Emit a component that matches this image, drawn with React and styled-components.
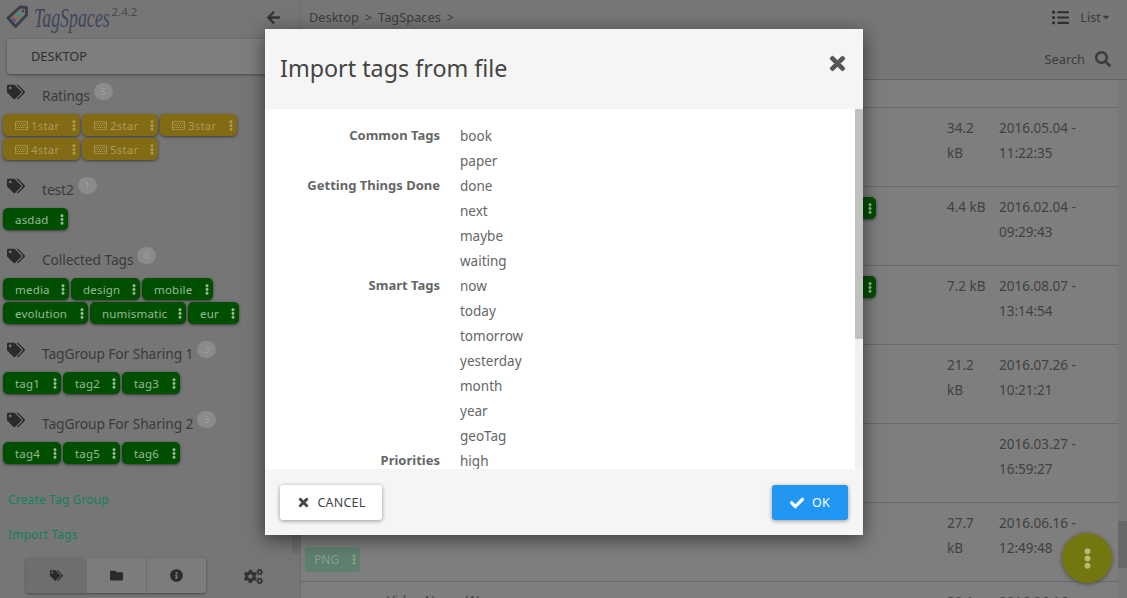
import React from "react";
import styled, { createGlobalStyle } from "styled-components";
import { FaTags, FaFolder, FaInfoCircle, FaCogs, FaArrowLeft, FaListUl, FaSearch, FaTimes, FaCheck, FaEllipsisV, FaRegKeyboard, FaCaretDown } from "react-icons/fa";

const FONT = `"Noto Sans", "Open Sans", sans-serif`;

const GROUPS = [
  { name: "Ratings", count: 5, color: "gold", icon: true, tags: [["1star", 77], ["2star", 76], ["3star", 77], ["4star", 77], ["5star", 76]] },
  { name: "test2", count: 1, tags: [["asdad", 65]] },
  { name: "Collected Tags", count: 6, tags: [["media", 66], ["design", 69], ["mobile", 71], ["evolution", 85], ["numismatic", 96], ["eur", 51]] },
  { name: "TagGroup For Sharing 1", count: 3, tags: [["tag1", 58], ["tag2", 57], ["tag3", 58]] },
  { name: "TagGroup For Sharing 2", count: 3, tags: [["tag4", 58], ["tag5", 57], ["tag6", 58]] },
];

const ROWS = [
  { size: "34.2 kB", date: "2016.05.04 - 11:22:35" },
  { size: "4.4 kB", date: "2016.02.04 - 09:29:43", stub: true },
  { size: "7.2 kB", date: "2016.08.07 - 13:14:54", stub: true },
  { size: "21.2 kB", date: "2016.07.26 - 10:21:21" },
  { size: "", date: "2016.03.27 - 16:59:27" },
  { size: "27.7 kB", date: "2016.06.16 - 12:49:48", png: true },
  { size: "20.1 kB", date: "2016.06.16 - 12:49:48", name: "Video Name (1)" },
];

const IMPORTED = [
  ["Common Tags", "book"], ["", "paper"],
  ["Getting Things Done", "done"], ["", "next"], ["", "maybe"], ["", "waiting"],
  ["Smart Tags", "now"], ["", "today"], ["", "tomorrow"], ["", "yesterday"], ["", "month"], ["", "year"], ["", "geoTag"],
  ["Priorities", "high"], ["", "medium"], ["", "low"],
];

const GlobalStyle = createGlobalStyle`
  html, body { margin: 0; height: 100%; overflow: hidden; }
  body { font-family: ${FONT}; color: #3c3c3c; background: #7e7e7e; }
`;

const Page = styled.div`
  display: flex;
  width: 1127px;
  height: 598px;
  overflow: hidden;
`;

const Sidebar = styled.aside`
  width: 301px;
  height: 598px;
  flex: none;
  display: flex;
  flex-direction: column;
  background: #767676;
  border-right: 1px solid #6c6c6c;
  box-sizing: border-box;
  position: relative;
`;

const BrandRow = styled.div`
  height: 38px;
  flex: none;
  display: flex;
  align-items: center;
  padding: 0 19px 0 6px;
`;

const LogoWrap = styled.svg`
  width: 22px;
  height: 24px;
  flex: none;
  margin: -5px 6px 0 0;
`;

const BrandName = styled.span`
  font-family: "Liberation Serif", serif;
  font-style: italic;
  font-size: 27px;
  line-height: 30px;
  color: #41455a;
  display: inline-block;
  transform: scaleX(0.66);
  transform-origin: left center;
  margin: -3px -38px 0 0;
`;

const Version = styled.span`
  font-size: 11.5px;
  color: #4a4a4a;
  align-self: flex-start;
  margin: 5px 0 0 1px;
  line-height: 14px;
  flex: 1;
`;

const BackIcon = styled(FaArrowLeft)`
  font-size: 15px;
  color: #333;
  margin-top: -4px;
`;

const LocationBox = styled.div`
  height: 35px;
  margin: 1px 0 0 7px;
  padding: 0 0 2px 24px;
  box-sizing: border-box;
  flex: none;
  display: flex;
  align-items: center;
  font-size: 12.8px;
  color: #2f2f2f;
  background: #7e7e7e;
  border-radius: 3px 0 0 3px;
  box-shadow: 0 1px 3px rgba(0, 0, 0, 0.4);
`;

const GroupTitle = styled.div`
  display: flex;
  align-items: flex-start;
  height: 31px;
  padding-left: 7px;
  margin-top: ${({ $first }) => ($first ? "9px" : "17px")};
  color: #3a3a3a;
`;

const GroupIcon = styled(FaTags)`
  font-size: 18px;
  color: #2a2a2a;
  flex: none;
  width: 18px;
`;

const GroupName = styled.span`
  font-size: 13.8px;
  letter-spacing: -0.1px;
  margin: 3px 0 0 17px;
  line-height: 20px;
  white-space: nowrap;
`;

const CountBadge = styled.span`
  width: 19px;
  height: 17px;
  border-radius: 9px;
  background: #8b8b8b;
  color: #a0a0a0;
  font-size: 9px;
  line-height: 17px;
  text-align: center;
  margin-left: 4px;
`;

const TagWrap = styled.div`
  display: flex;
  flex-wrap: wrap;
  gap: 2px;
  padding-left: 3px;
  width: 270px;
`;

const Tag = styled.span`
  box-sizing: border-box;
  height: 22px;
  display: flex;
  align-items: center;
  padding-left: 12px;
  border-radius: 5px;
  font-size: 11.5px;
  letter-spacing: 0.2px;
  background: ${({ $color }) => ($color === "gold" ? "#836a14" : "#004f00")};
  color: ${({ $color }) => ($color === "gold" ? "#a89a5a" : "#98b898")};
  box-shadow: 0 1px 3px rgba(0, 0, 0, 0.5);
  white-space: nowrap;
`;

const TagLabel = styled.span`
  flex: 1;
  display: flex;
  align-items: center;
  gap: 3px;
`;

const TagDots = styled(FaEllipsisV)`
  font-size: 11px;
  width: 6px;
  flex: none;
  margin-right: 3px;
`;

const SideLinks = styled.div`
  flex: 1;
  display: flex;
  flex-direction: column;
  gap: 18px;
  padding-top: 27px;
`;

const SideLink = styled.a`
  font-size: 12px;
  letter-spacing: 0.15px;
  color: #13805f;
  padding-left: 8px;
  line-height: 17px;
  display: block;
`;

const SideFooter = styled.div`
  flex: none;
  height: 40px;
  display: flex;
  align-items: flex-start;
  padding-left: 26px;
`;

const ButtonGroup = styled.div`
  display: flex;
  height: 35px;
  border-radius: 3px;
  background: #7c7c7c;
  box-shadow: 0 1px 3px rgba(0, 0, 0, 0.4);
`;

const GroupBtn = styled.span`
  width: 60px;
  display: flex;
  align-items: center;
  justify-content: center;
  font-size: 13px;
  color: #2a2a2a;
  box-sizing: border-box;
  border-left: ${({ $first }) => ($first ? "none" : "1px solid #6e6e6e")};
  background: ${({ $active }) => ($active ? "#6e6e6e" : "transparent")};
  border-radius: 3px;
`;

const GearBtn = styled.span`
  margin: 9px 0 0 38px;
  font-size: 19px;
  line-height: 19px;
  color: #333;
`;

const SideThumb = styled.span`
  position: absolute;
  right: 0;
  top: 535px;
  width: 8px;
  height: 18px;
  background: #6c6c6c;
`;

const Main = styled.main`
  flex: 1;
  min-width: 0;
  height: 598px;
  display: flex;
  flex-direction: column;
  background: #7e7e7e;
  position: relative;
`;

const TopBar = styled.header`
  height: 79px;
  flex: none;
  background: #777;
  border-bottom: 1px solid #626262;
  display: flex;
  flex-direction: column;
  padding: 0 16px 0 8px;
  font-size: 12.8px;
`;

const BarRow = styled.div`
  display: flex;
  align-items: center;
  justify-content: space-between;
  box-sizing: border-box;
  flex: none;
  height: ${({ $h }) => $h}px;
  padding-top: ${({ $pad }) => $pad || 0}px;
`;

const Crumbs = styled.div`
  display: flex;
  gap: 6px;
  color: #3c3c3c;
`;

const BarControl = styled.span`
  display: flex;
  align-items: center;
  margin-left: auto;
  color: #3c3c3c;
`;

const ListIcon = styled(FaListUl)`
  font-size: 17px;
  margin-right: 11px;
  color: #2e2e2e;
`;

const SearchIcon = styled(FaSearch)`
  font-size: 16px;
  margin-left: 10px;
  color: #3c3c3c;
`;

const FileList = styled.div`
  flex: 1;
  min-height: 0;
  overflow: hidden;
  padding-top: 27px;
  margin-right: 9px;
`;

const FileRow = styled.div`
  box-sizing: border-box;
  height: 79px;
  border-top: 1px solid #696969;
  display: flex;
  position: relative;
  font-size: 13.5px;
  line-height: 25px;
  color: #414141;
  padding-left: 646px;
  padding-top: 8px;
`;

const SizeCell = styled.div`
  width: 44px;
  margin-right: 8px;
  flex: none;
`;

const DateCell = styled.div`
  width: 90px;
  flex: none;
`;

const StubTag = styled.span`
  position: absolute;
  left: 559px;
  top: 10px;
  width: 16px;
  height: 22px;
  display: flex;
  align-items: center;
  justify-content: flex-end;
  background: #004f00;
  color: #98b898;
  border-radius: 5px;
  box-shadow: 0 1px 3px rgba(0, 0, 0, 0.5);
`;

const PngTag = styled.span`
  position: absolute;
  left: 4px;
  top: 44px;
  width: 55px;
  height: 25px;
  box-sizing: border-box;
  padding-left: 9px;
  display: flex;
  align-items: center;
  justify-content: space-between;
  border-radius: 3px;
  background: #5f7f6f;
  color: #86a092;
  font-size: 12px;
`;

const FileName = styled.span`
  position: absolute;
  left: 86px;
  top: 6px;
  font-size: 13px;
`;

const MainScrollbar = styled.div`
  position: absolute;
  right: 0;
  top: 80px;
  bottom: 0;
  width: 9px;
  background: #797979;
`;

const MainThumb = styled.div`
  position: absolute;
  top: 441px;
  left: 0;
  width: 9px;
  height: 47px;
  background: #686868;
`;

const Fab = styled.span`
  position: absolute;
  right: 15px;
  top: 533px;
  width: 50px;
  height: 50px;
  border-radius: 50%;
  background: #74770f;
  box-shadow: 0 1px 4px rgba(0, 0, 0, 0.4);
  display: flex;
  align-items: center;
  justify-content: center;
  color: #b9ba75;
  font-size: 21px;
`;

const Modal = styled.section`
  position: absolute;
  left: 265px;
  top: 29px;
  width: 598px;
  height: 506px;
  display: flex;
  flex-direction: column;
  background: #fff;
  box-shadow: 0 4px 18px rgba(0, 0, 0, 0.55);
`;

const ModalHead = styled.div`
  flex: none;
  height: 80px;
  background: #f5f5f5;
  display: flex;
  align-items: center;
  justify-content: space-between;
  padding: 0 15px;
`;

const ModalTitle = styled.h4`
  margin: -2px 0 0;
  font-weight: 400;
  font-size: 23.3px;
  color: #444;
`;

const CloseIcon = styled(FaTimes)`
  font-size: 21px;
  color: #555;
  margin-top: -12px;
  stroke: #555;
  stroke-width: 24px;
`;

const ModalBody = styled.div`
  flex: 1;
  min-height: 0;
  position: relative;
  overflow: hidden;
  padding-top: 15px;
`;

const ImportRow = styled.div`
  display: flex;
  height: 25px;
  line-height: 25px;
  font-size: 13.5px;
  color: #666;
`;

const ImportGroup = styled.span`
  width: 175px;
  margin: -1px 20px 0 0;
  text-align: right;
  font-weight: 700;
  font-size: 13px;
  white-space: nowrap;
  color: #666;
`;

const BodyTrack = styled.div`
  position: absolute;
  right: 0;
  top: 0;
  bottom: 0;
  width: 8px;
  background: #f1f1f1;
`;

const BodyThumb = styled.div`
  width: 8px;
  height: 230px;
  background: #c1c1c1;
`;

const ModalFoot = styled.div`
  flex: none;
  height: 66px;
  background: #f5f5f5;
  display: flex;
  align-items: flex-start;
  justify-content: space-between;
  padding: 16px 15px 0;
  box-sizing: border-box;
`;

const FootButton = styled.button`
  height: 35px;
  width: ${({ $w }) => $w}px;
  border: none;
  border-radius: 3px;
  font-family: ${FONT};
  font-size: 12.5px;
  letter-spacing: 0.2px;
  display: flex;
  align-items: center;
  justify-content: center;
  gap: 8px;
  padding: 0;
  background: ${({ $primary }) => ($primary ? "#2196f3" : "#fff")};
  color: ${({ $primary }) => ($primary ? "#fff" : "#444")};
  box-shadow: 0 1px 4px rgba(0, 0, 0, 0.4);
  svg {
    stroke: currentColor;
    stroke-width: 24px;
  }
`;

function Logo() {
  return (
    <LogoWrap viewBox="0 0 22 24">
      <path d="M2 13 L14 2 L20.5 2.5 L20.5 10 L9.5 21.5 Z" fill="none" stroke="#3a3d4a" strokeWidth="2.8" strokeLinejoin="round" />
      <path d="M11 7 L15 10 L13 12 L9 9.5 Z" fill="#3f8a80" />
      <path d="M8.5 10 L12.5 12.5 L11 14.5 L7 12 Z" fill="#a06a30" />
      <path d="M6.5 12.5 L10.5 15 L9 17 L5.5 14 Z" fill="#5a4a80" />
      <circle cx="17" cy="6" r="1.2" fill="#3a3d4a" />
    </LogoWrap>
  );
}

export default function App() {
  return (
    <Page>
      <GlobalStyle />
      <Sidebar>
        <BrandRow>
          <Logo />
          <BrandName>TagSpaces</BrandName>
          <Version>2.4.2</Version>
          <BackIcon />
        </BrandRow>
        <LocationBox>DESKTOP</LocationBox>
        {GROUPS.map((g, i) => (
          <React.Fragment key={g.name}>
            <GroupTitle $first={i === 0}>
              <GroupIcon />
              <GroupName>{g.name}</GroupName>
              <CountBadge>{g.count}</CountBadge>
            </GroupTitle>
            <TagWrap>
              {g.tags.map(([label, w]) => (
                <Tag key={label} $color={g.color} style={{ width: w }}>
                  <TagLabel>
                    {g.icon && <FaRegKeyboard size={13} />}
                    {label}
                  </TagLabel>
                  <TagDots />
                </Tag>
              ))}
            </TagWrap>
          </React.Fragment>
        ))}
        <SideLinks>
          <SideLink>Create Tag Group</SideLink>
          <SideLink>Import Tags</SideLink>
        </SideLinks>
        <SideFooter>
          <ButtonGroup>
            <GroupBtn $first $active><FaTags /></GroupBtn>
            <GroupBtn><FaFolder /></GroupBtn>
            <GroupBtn><FaInfoCircle /></GroupBtn>
          </ButtonGroup>
          <GearBtn><FaCogs /></GearBtn>
        </SideFooter>
        <SideThumb />
      </Sidebar>
      <Main>
        <TopBar>
          <BarRow $h={34}>
            <Crumbs>
              <span>Desktop</span><span>&gt;</span><span>TagSpaces</span><span>&gt;</span>
            </Crumbs>
            <BarControl>
              <ListIcon />List<FaCaretDown size={10} />
            </BarControl>
          </BarRow>
          <BarRow $h={45} $pad={5}>
            <BarControl>Search<SearchIcon /></BarControl>
          </BarRow>
        </TopBar>
        <FileList>
          {ROWS.map(r => (
            <FileRow key={r.date + r.size}>
              {r.stub && <StubTag><TagDots /></StubTag>}
              {r.png && <PngTag>PNG<TagDots /></PngTag>}
              {r.name && <FileName>{r.name}</FileName>}
              <SizeCell>{r.size}</SizeCell>
              <DateCell>{r.date}</DateCell>
            </FileRow>
          ))}
        </FileList>
        <MainScrollbar><MainThumb /></MainScrollbar>
        <Fab><FaEllipsisV /></Fab>
      </Main>
      <Modal>
        <ModalHead>
          <ModalTitle>Import tags from file</ModalTitle>
          <CloseIcon />
        </ModalHead>
        <ModalBody>
          {IMPORTED.map(([group, tag]) => (
            <ImportRow key={tag}>
              <ImportGroup>{group}</ImportGroup>
              <span>{tag}</span>
            </ImportRow>
          ))}
          <BodyTrack><BodyThumb /></BodyTrack>
        </ModalBody>
        <ModalFoot>
          <FootButton $w={102}><FaTimes size={13} />CANCEL</FootButton>
          <FootButton $w={76} $primary><FaCheck size={14} />OK</FootButton>
        </ModalFoot>
      </Modal>
    </Page>
  );
}
